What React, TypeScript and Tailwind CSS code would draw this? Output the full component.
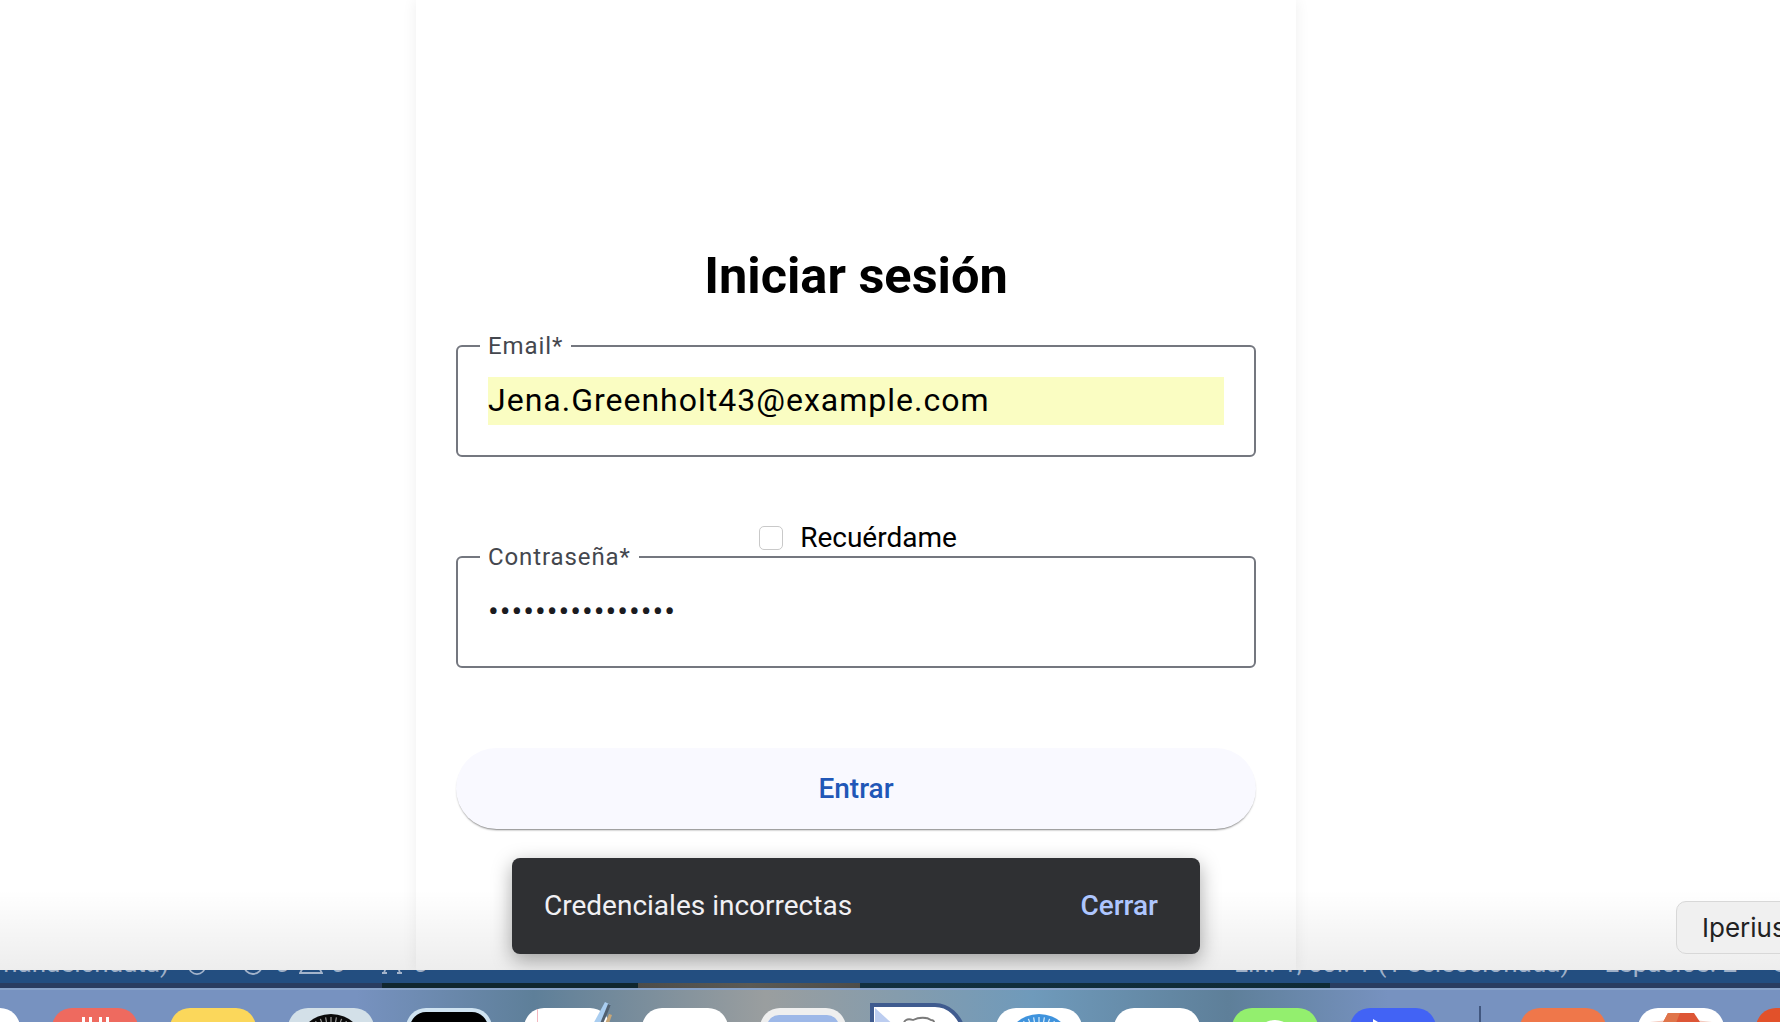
function Mask({ className }: { className: string }) {
  return <div className={className} />;
}

function DockIcon({ bg, children }: { bg: string; children?: React.ReactNode }) {
  return (
    <div className={`relative h-[86px] w-[86px] shrink-0 overflow-hidden rounded-[20px] ${bg}`}>{children}</div>
  );
}

const ticks = Array.from({ length: 36 }, (_, i) => (i * Math.PI * 2) / 36);

function Dial({ fill, tick }: { fill: string; tick: string }) {
  return (
    <svg viewBox="0 0 70 70" className="absolute top-[5px] left-[8px] h-[70px] w-[70px]">
      <circle cx="35" cy="35" r="34" fill={fill} />
      {ticks.map((a, i) => (
        <line
          key={i}
          x1={35 + Math.cos(a) * 25}
          y1={35 + Math.sin(a) * 25}
          x2={35 + Math.cos(a) * 31}
          y2={35 + Math.sin(a) * 31}
          stroke={tick}
          strokeWidth="1.2"
        />
      ))}
    </svg>
  );
}

function Field({ label, children }: { label: string; children: React.ReactNode }) {
  return (
    <fieldset className="h-[120px] w-full rounded-[6px] border-2 border-[#74777f] px-[22px]">
      <legend className="px-[8px] text-[24px] leading-[18px] tracking-[0.9px] text-[#44474e]">{label}</legend>
      {children}
    </fieldset>
  );
}

function Arc({ d, className }: { d: number; className: string }) {
  return (
    <svg viewBox="0 0 20 20" style={{ width: d, height: d }} className={`shrink-0 ${className}`}>
      <circle cx="10" cy="10" r="9" fill="none" stroke="#a4b4cb" strokeWidth="1.8" />
    </svg>
  );
}

export default function App() {
  return (
    <div className="flex h-[1022px] w-[1780px] flex-col overflow-hidden bg-white font-['Roboto',sans-serif]">
      <main className="relative flex h-[970px] shrink-0 overflow-hidden pl-[416px]">
        <section className="flex h-full w-[880px] flex-col items-stretch bg-white px-[40px] pt-[244px] shadow-[0_0_14px_rgba(0,0,0,0.07)]">
          <h1 className="h-[64px] text-center text-[50.5px] leading-[64px] font-bold text-black">Iniciar sesión</h1>
          <div className="mt-[29px]">
            <Field label="Email*">
              <div className="mt-[22px] ml-[8px] h-[48px] w-[736px] bg-[#fafdc2] text-[32px] leading-[47px] tracking-[1px] text-black">
                Jena.Greenholt43@example.com
              </div>
            </Field>
          </div>
          <label className="mt-[57px] flex h-[48px] items-center justify-center gap-[17px] pl-[4px] text-[28px] text-black">
            <span className="h-[24px] w-[24px] rounded-[5px] border border-[#c9c9c9] bg-white" />
            Recuérdame
          </label>
          <div className="mt-[-14px]">
            <Field label="Contraseña*">
              <div className="mt-[23px] ml-[8px] h-[48px] text-[32px] leading-[44px] tracking-[0.95px] text-[#1b1b1f]">
                ••••••••••••••••
              </div>
            </Field>
          </div>
          <button className="mt-[80px] h-[81px] w-full rounded-full bg-[#f9f9ff] text-[28px] font-medium text-[#2157b7] shadow-[0_2px_2px_-1px_rgba(0,0,0,0.5)]">
            Entrar
          </button>
        </section>

        <div className="pointer-events-none absolute inset-x-0 bottom-0 h-[80px] bg-gradient-to-b from-transparent to-[#00000012]" />

        <div className="absolute top-[858px] left-[512px] flex h-[96px] w-[688px] items-center justify-between rounded-[8px] bg-[#2f3033] pr-[42px] pl-[32px] shadow-[0_6px_20px_rgba(0,0,0,0.35)]">
          <span className="text-[28px] text-[#f1f0f4]">Credenciales incorrectas</span>
          <span className="text-[28px] font-medium text-[#aec6ff]">Cerrar</span>
        </div>

        <div className="absolute top-[901px] left-[1676px] flex h-[53px] w-[160px] items-center rounded-[10px] border border-[#d8d8d8] bg-[#f0f0f0] pl-[25px] font-['Inter',sans-serif] text-[26px] text-[#222]">
          Iperius
        </div>
      </main>

      <footer className="flex h-[13px] shrink-0 items-start overflow-hidden bg-[#234e80] text-[26px] leading-[32px] text-[#9fb0c8]">
        <div className="mt-[-23px] flex h-[32px] items-start whitespace-nowrap">
          <div className="flex w-[169px] shrink-0 justify-end overflow-hidden">manuelchdata)</div>
          <Arc d={18} className="mt-[10px] ml-[19px]" />
          <Arc d={20} className="mt-[8px] ml-[37px]" />
          <span className="ml-[12px]">0</span>
          <svg viewBox="0 0 24 22" className="mt-[5px] ml-[9px] h-[22px] w-[24px] shrink-0">
            <path d="M1 21 L12 2 L23 21 Z" fill="none" stroke="#a4b4cb" strokeWidth="1.8" />
          </svg>
          <span className="ml-[8px]">0</span>
          <svg viewBox="0 0 24 22" className="mt-[5px] ml-[35px] h-[22px] w-[24px] shrink-0">
            <path d="M4 21 L9 6 M20 21 L15 6 M2 21 H7 M17 21 H22" fill="none" stroke="#a4b4cb" strokeWidth="1.8" />
          </svg>
          <span className="ml-[9px]">0</span>
        </div>
        <div className="mt-[-23px] ml-auto flex h-[32px] gap-[35px] whitespace-nowrap">
          <span>Lín. 1, col. 1 (1 seleccionada)</span>
          <span>Espacios: 2</span>
          <span className="w-[8px] overflow-hidden">UTF-8</span>
        </div>
      </footer>

      <div className="h-[5px] shrink-0 bg-[linear-gradient(90deg,#2a3d60_0px,#2a3d60_382px,#10262f_382px,#10262f_638px,#4d4c49_638px,#5b5a55_750px,#4d4c49_860px,#123040_860px,#0f2a35_1330px,#2a3d60_1330px,#2a3d60_1780px)]" />

      <div className="flex min-h-0 flex-1 items-start gap-[32px] overflow-hidden border-t-2 border-[#88a2c8] bg-[linear-gradient(90deg,#7792c0_0%,#7792c0_20%,#5e7f99_30%,#9a9e9f_43%,#6f9abb_58%,#5e7f99_69%,#7792c0_78%,#7792c0_100%)] pt-[18px]">
        <div className="ml-[-66px] flex gap-[32px]">
          <DockIcon bg="bg-white" />
          <DockIcon bg="bg-[#ee6a5f]">
            <div className="mt-[9px] flex justify-center gap-[4px]">
              <span className="h-[9px] w-[3px] bg-white" />
              <span className="h-[9px] w-[3px] bg-white" />
              <span className="ml-[3px] h-[9px] w-[3px] bg-white" />
              <span className="h-[9px] w-[3px] bg-white" />
            </div>
          </DockIcon>
          <DockIcon bg="bg-[#fbd75b]" />
          <DockIcon bg="bg-[#d3e0e8]">
            <Dial fill="#0a0a0a" tick="#9a9a9a" />
          </DockIcon>
          <DockIcon bg="bg-[#cfe3f1]">
            <Mask className="mx-[4px] mt-[4px] h-[80px] rounded-[16px] bg-black" />
          </DockIcon>
          <div className="relative h-[86px] w-[86px] shrink-0">
            <DockIcon bg="bg-white">
              <Mask className="ml-[13px] h-full w-px bg-[#f4b8c0]" />
            </DockIcon>
            <svg viewBox="0 0 24 26" className="absolute top-[-8px] left-[66px] h-[26px] w-[24px]">
              <path d="M2 26 L15 2 L21 5 L10 26 Z" fill="#a9cdf0" />
              <path d="M9 26 L18 4 L21 5 L12 26 Z" fill="#51606f" />
              <path d="M14 26 L19 14 L22 15 L18 26 Z" fill="#c8a778" />
            </svg>
          </div>
          <DockIcon bg="bg-white" />
          <DockIcon bg="bg-[#efefef]">
            <Mask className="mx-[7px] mt-[7px] h-[70px] rounded-[12px] bg-[#9db8e8]" />
          </DockIcon>
          <svg viewBox="0 0 96 26" className="mt-[-6px] mr-[-1px] ml-[-9px] h-[26px] w-[96px] shrink-0">
            <path d="M3 26 V3 H66 C80 3 90 14 94 26 Z" fill="#fff" stroke="#3f5b8f" strokeWidth="4" />
            <path d="M6 6 L28 26 H6 Z" fill="#bccdf0" />
            <path d="M34 26 C34 18 38 16 44 18 C50 15 58 15 62 18 C66 18 66 22 64 26" fill="#fff" stroke="#7a7a7a" strokeWidth="1.8" />
          </svg>
          <DockIcon bg="bg-white">
            <Dial fill="#3f93dd" tick="#d7ecfb" />
          </DockIcon>
          <DockIcon bg="bg-white" />
          <DockIcon bg="bg-[#93ef6e]">
            <Mask className="mx-auto mt-[12px] h-[40px] w-[40px] rounded-full bg-white" />
          </DockIcon>
          <DockIcon bg="bg-[#4263f5]">
            <Mask className="absolute top-[11px] left-[23px] h-0 w-0 border-y-[18px] border-l-[30px] border-y-transparent border-l-white" />
          </DockIcon>
        </div>
        <div className="ml-[11px] mt-[-2px] h-[34px] w-[2px] shrink-0 bg-[#41577f]" />
        <div className="ml-[7px] flex gap-[32px]">
          <DockIcon bg="bg-[#ef774a]" />
          <DockIcon bg="bg-white">
            <svg viewBox="0 0 86 20" className="absolute top-0 left-0 h-[20px] w-[86px]">
              <path d="M12 14 L30 12 L32 14 L12 18 Z" fill="#f4c9bd" />
              <path d="M74 14 L56 12 L54 14 L74 18 Z" fill="#f4c9bd" />
              <path d="M30 5 H56 L66 20 H22 Z" fill="#dd5636" />
              <path d="M30 5 H42 L36 20 H22 Z" fill="#e0754a" />
            </svg>
          </DockIcon>
          <DockIcon bg="bg-[#e2512a]" />
        </div>
      </div>
    </div>
  );
}
